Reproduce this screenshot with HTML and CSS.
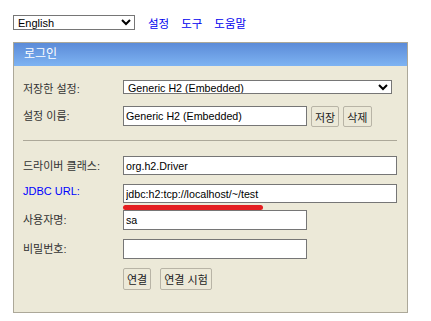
FILE: index.html
```
<html>
<head>
	<link rel="stylesheet" href="styles.css">
</head>
<body>
	<div class="topbar">
		<select class="lang">
			<option>English</option>
		</select>
		<a href="#">설정</a>
		<a href="#">도구</a>
		<a href="#">도움말</a>
	</div>

	<div class="login">
		<div class="login-title">로그인</div>
		<div class="login-body">
			<div class="row row-select">
				<label>저장한 설정:</label>
				<select class="setting">
					<option>Generic H2 (Embedded)</option>
				</select>
			</div>
			<div class="row">
				<label>설정 이름:</label>
				<input class="short" type="text" value="Generic H2 (Embedded)"/>
				<button>저장</button>
				<button>삭제</button>
			</div>

			<hr/>

			<div class="row">
				<label>드라이버 클래스:</label>
				<input class="long" type="text" value="org.h2.Driver"/>
			</div>
			<div class="row">
				<label class="link">JDBC URL:</label>
				<div class="url">
					<input class="long" type="text" value="jdbc:h2:tcp://localhost/~/test"/>
					<span class="mark"></span>
				</div>
			</div>
			<div class="row row-user">
				<label>사용자명:</label>
				<input class="short" type="text" value="sa"/>
			</div>
			<div class="row">
				<label>비밀번호:</label>
				<input class="short" type="password" value=""/>
			</div>
			<div class="row row-buttons">
				<label></label>
				<button>연결</button>
				<button>연결 시험</button>
			</div>
		</div>
	</div>
</body>
</html>
```

FILE: styles.css
```
body{
	margin: 15px 0 0 13px;
	font-family: "Liberation Sans", "Noto Sans CJK KR", sans-serif;
	font-size: 11px;
	background: #fff;
}

.topbar{
	display: flex;
	align-items: center;
	height: 15px;
}
.topbar a{
	color: #0000ee;
	text-decoration: none;
	margin-left: 12px;
	font-size: 11.5px;
}
.lang{
	width: 122px;
	height: 15px;
	font-family: "Liberation Sans", sans-serif;
	font-size: 11px;
	border: 1px solid #767676;
	background: #fff;
	padding: 0;
	margin-right: 1px;
}

.login{
	margin-top: 12px;
	width: 393px;
	border: 1px solid #aca899;
	background: #ece9d8;
}
.login-title{
	height: 23px;
	line-height: 22px;
	padding-left: 10px;
	color: #fff;
	font-size: 12px;
	background: linear-gradient(#5b8bd8, #7eb3f2);
}
.login-body{
	padding: 14px 9px 22px 9px;
}

.row{
	display: flex;
	align-items: flex-start;
	margin-bottom: 9px;
}
.row label{
	width: 100px;
	flex: none;
	color: #333;
	padding-top: 1px;
}
.row label.link{
	color: #0000ff;
}
.row-select{
	margin-bottom: 10px;
}
.row-select label{
	padding-top: 0;
}
.row-user{
	margin-top: -2px;
}

input, select, button{
	font-family: "Liberation Sans", "Noto Sans CJK KR", sans-serif;
	font-size: 10.7px;
	color: #000;
}
input{
	box-sizing: border-box;
	height: 20px;
	border: 1px solid #767676;
	background: #fff;
	padding: 0 2px;
	margin: 0;
}
input.short{
	width: 184px;
}
input.long{
	width: 274px;
	height: 19px;
}
.setting{
	box-sizing: border-box;
	width: 269px;
	height: 14px;
	border: 1px solid #767676;
	background: #fff;
	padding: 0;
	line-height: 12px;
}
button{
	box-sizing: border-box;
	height: 21px;
	margin-left: 4px;
	padding: 0 3px;
	border: 1px solid #b8b4a6;
	border-radius: 2px;
	background: #ece9d8;
	color: #222;
	font-size: 11px;
}
.row-buttons button{
	height: 22px;
	margin-left: 0;
	margin-right: 9px;
}
.row-buttons{
	margin-bottom: 0;
}

hr{
	border: none;
	border-top: 1px solid #aca899;
	margin: 13px 0 15px 0;
	width: 374px;
}

.url{
	position: relative;
	height: 19px;
}
.mark{
	position: absolute;
	left: 0;
	top: 21px;
	width: 140px;
	height: 5px;
	border-radius: 3px;
	background: #e41e20;
}
```
